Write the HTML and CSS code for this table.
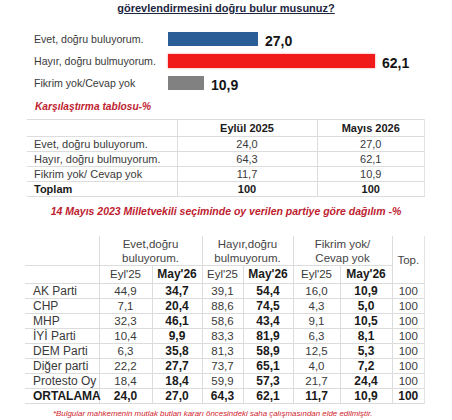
FILE: index.html
```html
<!DOCTYPE html>
<html lang="tr">
  <head>
    <meta charset="UTF-8" />
    <meta name="viewport" content="width=device-width, initial-scale=1.0" />
    <title>Anket</title>
    <link rel="stylesheet" href="styles.css">
  </head>
  <body>
    <div class="sheet">
      <p class="question">görevlendirmesini doğru bulur musunuz?</p>

      <div class="bars">
        <div class="bar-row">
          <span class="bar-label">Evet, doğru buluyorum.</span>
          <span class="bar bar-yes" style="width: 90px"></span>
          <span class="bar-value">27,0</span>
        </div>
        <div class="bar-row">
          <span class="bar-label">Hayır, doğru bulmuyorum.</span>
          <span class="bar bar-no" style="width: 207px"></span>
          <span class="bar-value">62,1</span>
        </div>
        <div class="bar-row">
          <span class="bar-label">Fikrim yok/Cevap yok</span>
          <span class="bar bar-none" style="width: 36px"></span>
          <span class="bar-value">10,9</span>
        </div>
      </div>

      <p class="red-caption">Karşılaştırma tablosu-%</p>

      <table class="compare">
        <colgroup>
          <col class="c-label" />
          <col class="c-first" />
          <col />
        </colgroup>
        <tr class="head">
          <td></td>
          <td>Eylül 2025</td>
          <td>Mayıs 2026</td>
        </tr>
        <tr>
          <td class="label">Evet, doğru buluyorum.</td>
          <td>24,0</td>
          <td>27,0</td>
        </tr>
        <tr>
          <td class="label">Hayır, doğru bulmuyorum.</td>
          <td>64,3</td>
          <td>62,1</td>
        </tr>
        <tr>
          <td class="label">Fikrim yok/ Cevap yok</td>
          <td>11,7</td>
          <td>10,9</td>
        </tr>
        <tr class="total">
          <td class="label">Toplam</td>
          <td>100</td>
          <td>100</td>
        </tr>
      </table>

      <p class="red-title">14 Mayıs 2023 Milletvekili seçiminde oy verilen partiye göre dağılım -%</p>

      <table class="parties">
        <colgroup>
          <col class="p-label" />
          <col class="p1" />
          <col class="p2" />
          <col class="p3" />
          <col class="p4" />
          <col class="p5" />
          <col class="p6" />
          <col />
        </colgroup>
        <tr class="group-row">
          <td class="corner"></td>
          <td colspan="2" class="group">Evet,doğru<br />buluyorum.</td>
          <td colspan="2" class="group">Hayır,doğru<br />bulmuyorum.</td>
          <td colspan="2" class="group">Fikrim yok/<br />Cevap yok</td>
          <td rowspan="2" class="group">Top.</td>
        </tr>
        <tr class="sub-row">
          <td></td>
          <td>Eyl'25</td>
          <td class="b">May'26</td>
          <td>Eyl'25</td>
          <td class="b">May'26</td>
          <td>Eyl'25</td>
          <td class="b">May'26</td>
        </tr>
        <tr>
          <td class="label">AK Parti</td>
          <td>44,9</td><td class="b">34,7</td>
          <td>39,1</td><td class="b">54,4</td>
          <td>16,0</td><td class="b">10,9</td>
          <td>100</td>
        </tr>
        <tr>
          <td class="label">CHP</td>
          <td>7,1</td><td class="b">20,4</td>
          <td>88,6</td><td class="b">74,5</td>
          <td>4,3</td><td class="b">5,0</td>
          <td>100</td>
        </tr>
        <tr>
          <td class="label">MHP</td>
          <td>32,3</td><td class="b">46,1</td>
          <td>58,6</td><td class="b">43,4</td>
          <td>9,1</td><td class="b">10,5</td>
          <td>100</td>
        </tr>
        <tr>
          <td class="label">İYİ Parti</td>
          <td>10,4</td><td class="b">9,9</td>
          <td>83,3</td><td class="b">81,9</td>
          <td>6,3</td><td class="b">8,1</td>
          <td>100</td>
        </tr>
        <tr>
          <td class="label">DEM Parti</td>
          <td>6,3</td><td class="b">35,8</td>
          <td>81,3</td><td class="b">58,9</td>
          <td>12,5</td><td class="b">5,3</td>
          <td>100</td>
        </tr>
        <tr>
          <td class="label">Diğer parti</td>
          <td>22,2</td><td class="b">27,7</td>
          <td>73,7</td><td class="b">65,1</td>
          <td>4,0</td><td class="b">7,2</td>
          <td>100</td>
        </tr>
        <tr>
          <td class="label">Protesto Oy</td>
          <td>18,4</td><td class="b">18,4</td>
          <td>59,9</td><td class="b">57,3</td>
          <td>21,7</td><td class="b">24,4</td>
          <td>100</td>
        </tr>
        <tr class="average">
          <td class="label">ORTALAMA</td>
          <td>24,0</td><td>27,0</td>
          <td>64,3</td><td>62,1</td>
          <td>11,7</td><td>10,9</td>
          <td>100</td>
        </tr>
      </table>

      <p class="footnote">*Bulgular mahkemenin mutlak butlan kararı öncesindeki saha çalışmasından elde edilmiştir.</p>
    </div>
  </body>
</html>
```

FILE: styles.css
```css
body {
  margin: 0;
  background-color: #ffffff;
  font-family: "Liberation Sans", Arial, sans-serif;
  color: #3a3a3a;
}
.sheet {
  width: 452px;
}
p {
  margin: 0;
}
.question {
  margin-top: 1px;
  text-align: center;
  font-size: 11px;
  line-height: 14px;
  font-weight: bold;
  color: #1d2640;
  text-decoration: underline;
}
.bars {
  margin-top: 13px;
  padding-left: 34px;
}
.bar-row {
  display: flex;
  align-items: center;
  height: 22px;
}
.bar-label {
  width: 134px;
  font-size: 10.6px;
  color: #3a3a3a;
}
.bar {
  height: 14px;
}
.bar-yes {
  background-color: #2b5e96;
}
.bar-no {
  background-color: #f01a1a;
  box-shadow: 0 0 2px rgba(240, 26, 26, 0.5);
}
.bar-none {
  background-color: #818181;
}
.bar-value {
  margin-left: 7px;
  margin-top: 4px;
  font-size: 14px;
  font-weight: bold;
  color: #141414;
}
.red-caption {
  margin: 6px 0 0 35px;
  font-size: 10.2px;
  line-height: 14px;
  font-style: italic;
  font-weight: bold;
  color: #be2230;
}
.compare {
  margin: 5px 0 0 27px;
  width: 398px;
  border-collapse: collapse;
  table-layout: fixed;
  font-size: 11px;
}
.compare .c-label {
  width: 150px;
}
.compare .c-first {
  width: 140px;
}
.compare td {
  height: 14px;
  padding: 0;
  line-height: 13px;
  text-align: center;
  border-top: 1px solid #dcdcdc;
  border-bottom: 1px solid #dcdcdc;
  border-left: 1px solid #dcdcdc;
}
.compare td:first-child {
  border-left: none;
}
.compare td:last-child {
  border-right: 1px solid #e4e4e4;
}
.compare .head td {
  height: 16px;
  font-weight: bold;
  color: #1a1a1a;
}
.compare .label {
  padding-left: 7px;
  text-align: left;
}
.compare .total td {
  font-weight: bold;
  color: #1a1a1a;
}
.red-title {
  margin-top: 7px;
  text-align: center;
  font-size: 10.5px;
  line-height: 14px;
  font-style: italic;
  font-weight: bold;
  color: #be2230;
}
.parties {
  margin: 18px 0 0 25px;
  width: 400px;
  border-collapse: collapse;
  table-layout: fixed;
  font-size: 11.5px;
}
.parties .p-label { width: 74px; }
.parties .p1 { width: 53px; }
.parties .p2 { width: 50px; }
.parties .p3 { width: 41px; }
.parties .p4 { width: 50px; }
.parties .p5 { width: 47px; }
.parties .p6 { width: 52px; }
.parties td {
  height: 14px;
  padding: 0;
  line-height: 13px;
  text-align: center;
  border-bottom: 1px solid #dcdcdc;
  border-left: 1px solid #dcdcdc;
}
.parties td:first-child {
  border-left: none;
}
.parties td:last-child,
.parties .group[rowspan] {
  border-right: 1px solid #e4e4e4;
}
.parties .group-row td {
  height: 29px;
  line-height: 14px;
  color: #444;
}
.parties .sub-row td {
  height: 17px;
}
.parties .label {
  padding-left: 8px;
  text-align: left;
  font-size: 12px;
}
.parties .b {
  font-size: 12px;
  font-weight: bold;
  color: #1a1a1a;
}
.parties .average td {
  font-size: 12px;
  font-weight: bold;
  color: #1a1a1a;
}
.footnote {
  margin: 4px 0 0 53px;
  font-size: 7.9px;
  line-height: 11px;
  font-style: italic;
  color: #d0222b;
}
```
